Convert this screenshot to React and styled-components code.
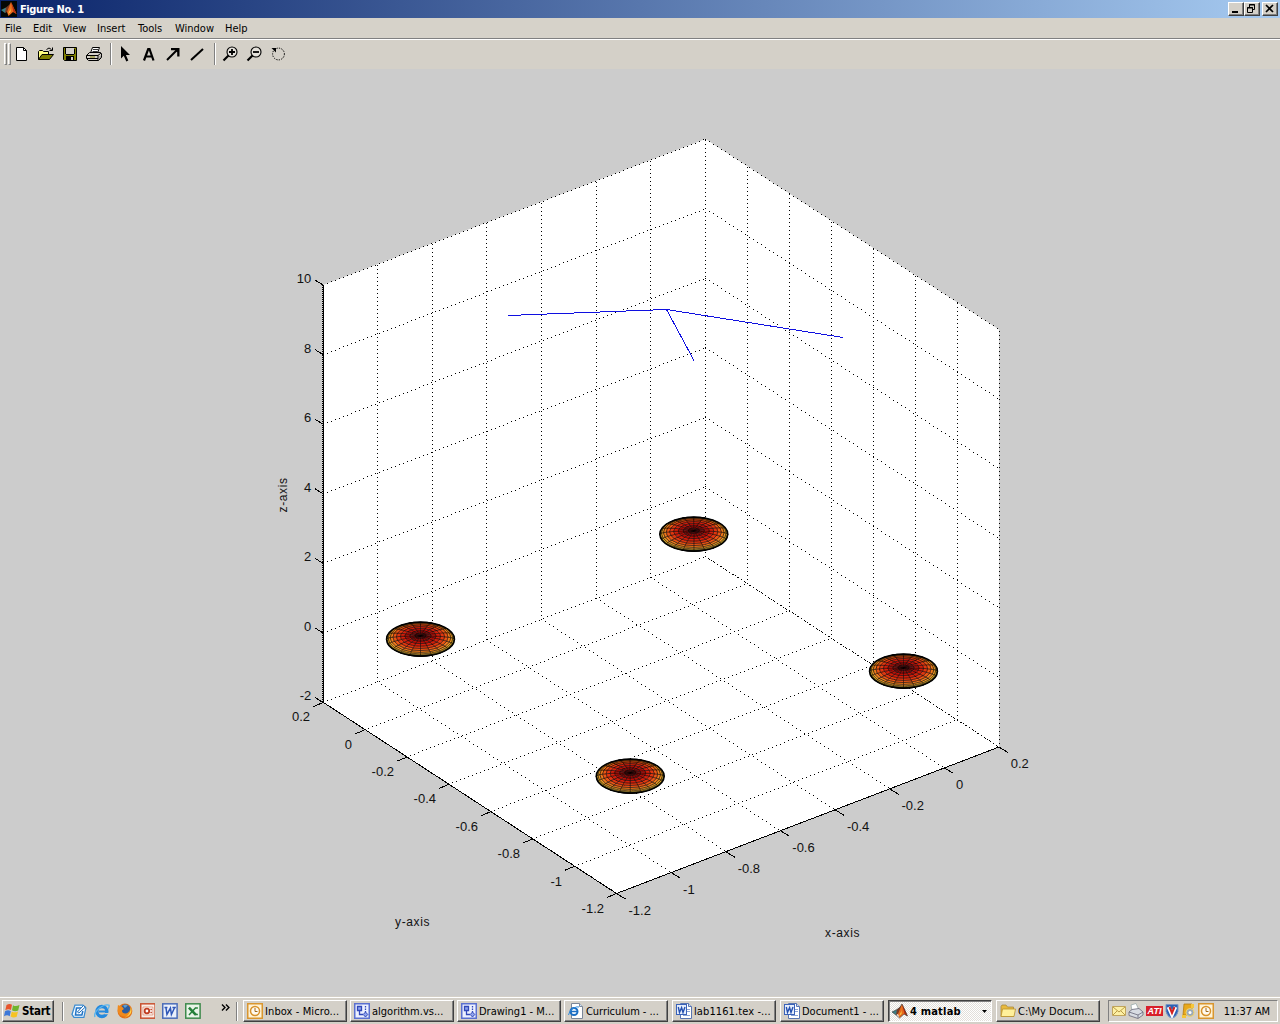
import React from "react";
import styled, { createGlobalStyle, css } from "styled-components";

const UI_FONT = `"DejaVu Sans Condensed", "DejaVu Sans", sans-serif`;

const Global = createGlobalStyle`
  * { box-sizing: border-box; }
  body { margin: 0; background: #cccccc; overflow: hidden; }
`;

const Desktop = styled.div`
  width: 1280px;
  height: 1024px;
  display: flex;
  flex-direction: column;
  background: #cccccc;
  color: #000;
  font: 11px/14px ${UI_FONT};
  font-stretch: condensed;
  white-space: nowrap;
`;

const TitleBar = styled.header`
  height: 18px;
  flex: none;
  display: flex;
  align-items: center;
  padding: 0 2px 0 1px;
  background: linear-gradient(90deg, #0a246a, #a6caf0);
`;

const Title = styled.h1`
  flex: 1;
  margin: 0 0 0 3px;
  padding-top: 1px;
  color: #fff;
  font-size: 11px;
  line-height: 18px;
  font-weight: bold;
  letter-spacing: -0.4px;
`;

const raised = css`
  background: #d4d0c8;
  border: 1px solid;
  border-color: #fff #404040 #404040 #fff;
  box-shadow: inset -1px -1px #808080;
`;

const CaptionButton = styled.button`
  ${raised}
  width: 16px;
  height: 14px;
  padding: 0;
  margin-left: ${(p) => p.$gap || 0}px;
  display: flex;
`;

const MenuBar = styled.nav`
  height: 21px;
  flex: none;
  display: flex;
  align-items: center;
  gap: 12px;
  padding: 2px 5px 0;
  background: #d6d2c9;
  border-bottom: 1px solid #808080;
`;

const MenuItem = styled.span`
  width: ${(p) => p.$w}px;
`;

const ToolBar = styled.div`
  height: 30px;
  flex: none;
  display: flex;
  align-items: center;
  padding: 0 0 1px 4px;
  background: #d4d0c8;
  border-top: 1px solid #fff;
`;

const Grip = styled.i`
  width: 3px;
  height: 22px;
  margin-right: 1px;
  border: 1px solid;
  border-color: #fff #808080 #808080 #fff;
`;

const ToolGroup = styled.div`
  display: flex;
  margin-left: ${(p) => p.$shift || 0}px;
`;

const ToolIcon = styled.span`
  width: 24px;
  height: 24px;
  display: flex;
  align-items: center;
  justify-content: center;
`;

const Divider = styled.i`
  width: 2px;
  height: ${(p) => p.$h || 22}px;
  margin: 0 ${(p) => p.$right || 0}px 0 ${(p) => p.$left || 0}px;
  border-left: 1px solid #808080;
  border-right: 1px solid #fff;
`;

const FigureArea = styled.main`
  flex: 1;
  min-height: 0;
  background: #cccccc;
  svg { display: block; }
`;

const TaskBar = styled.footer`
  height: 28px;
  flex: none;
  display: flex;
  align-items: center;
  padding: 3px 2px 1px;
  background: #d4d0c8;
  box-shadow: inset 0 1px #d4d0c8, inset 0 2px #fff;
`;

const StartButton = styled.button`
  ${raised}
  width: 52px;
  height: 22px;
  display: flex;
  align-items: center;
  gap: 2px;
  padding: 0 0 0 1px;
  font: bold 11.5px/14px ${UI_FONT};
  font-stretch: condensed;
  letter-spacing: -0.25px;
  color: #000;
`;

const QuickLaunch = styled.div`
  width: 165px;
  display: flex;
  align-items: center;
  gap: 7px;
  padding-left: 6px;
`;

const Chevrons = styled.svg`
  margin: 0 0 7px 13px;
`;

const Tasks = styled.div`
  width: 862px;
  display: flex;
  gap: 3px;
`;

const Task = styled.button`
  ${raised}
  width: 104px;
  height: 22px;
  flex: none;
  display: flex;
  align-items: center;
  gap: 2px;
  padding: 0 4px 0 3px;
  font: ${(p) => (p.$active ? "bold" : "normal")} 11px/14px ${UI_FONT};
  font-stretch: condensed;
  color: #000;
  text-align: left;
  &:nth-child(n + 5) { margin-left: 1px; }
  ${(p) =>
    p.$active &&
    css`
      background: repeating-conic-gradient(#fff 0 25%, #e2dfda 0 50%) 0 0 / 2px 2px;
      border-color: #404040 #fff #fff #404040;
      box-shadow: inset 1px 1px #808080;
    `}
  svg { flex: none; }
`;

const TaskLabel = styled.span`
  flex: 1;
  padding-top: 1px;
  letter-spacing: ${(p) => p.$ls || 0}px;
`;

const Tray = styled.div`
  width: 170px;
  height: 22px;
  margin-left: auto;
  display: flex;
  align-items: center;
  gap: 2px;
  padding: 0 3px;
  border: 1px solid;
  border-color: #808080 #fff #fff #808080;
`;

const Clock = styled.time`
  margin-left: auto;
  margin-right: 4px;
  padding-top: 1px;
  letter-spacing: -0.1px;
`;

/* ---------- icons ---------- */

const Icon = ({ w = 16, h = 16, children }) => (
  <svg width={w} height={h} viewBox={`0 0 ${w} ${h}`}>{children}</svg>
);

const MatlabIcon = ({ boxed }) => (
  <Icon>
    {boxed && <rect y="0" width="16" height="16" fill="#050805" />}
    <path d="M0 9 5 6.500 8 9 4 12Z" fill="#3d7f86" />
    <path d="M5 6.500Q8 5 10 1L8 10 4 12Z" fill="#7b3a22" />
    <path d="M10 1Q12 5 15.500 13L12 11 7.500 15 6 11Z" fill="#e8681b" />
    <path d="M10 1 9.500 8 7 13 9.500 11Z" fill="#f8d34a" />
    <path d="M10 1Q12 5 15.500 13L12.500 11Z" fill="#b52b10" />
    {!boxed && <path d="M0 9 5 6.500Q8 5 10 1 12 5 15.500 13L12 11 7.500 15 4 12Z" fill="none" stroke="#333" strokeWidth=".6" />}
  </Icon>
);

const toolIcons = {
  new: (
    <Icon>
      <path d="M2.500 1.500h7l3 3v10h-10z" fill="#fff" stroke="#000" />
      <path d="M9.500 1.500v3h3" fill="none" stroke="#000" />
    </Icon>
  ),
  open: (
    <Icon>
      <path d="M.5 13.500V5.500l1-1h3l1 1h5v3" fill="#ffff80" stroke="#000" />
      <path d="M.5 13.500 4 8.500h11.500l-4 5z" fill="#808000" stroke="#000" />
      <path d="M8.500 3.500Q11 .5 13.500 3.500M14.500 1.500v3h-3" fill="none" stroke="#000" />
    </Icon>
  ),
  save: (
    <Icon>
      <path d="M1.500 1.500h13v13h-12l-1-1z" fill="#808000" stroke="#000" />
      <path d="M4 2h8v6H4z" fill="#d4d0c8" />
      <path d="M3.500 2v6M12.500 3v5M4 8.500h8" stroke="#000" />
      <path d="M4 10h8v5H4z" fill="#000" />
      <path d="M9 11h2v3H9z" fill="#d4d0c8" />
    </Icon>
  ),
  print: (
    <Icon>
      <path d="M4.500 7 6.500 1.500h7L11.500 7z" fill="#fff" stroke="#000" />
      <path d="M7 3.500h5M6.500 5.500h5" stroke="#000" strokeWidth=".8" />
      <path d="m.5 9.500 3-3h11l1 1v4l-3 3h-10l-2-2z" fill="#d4d0c8" stroke="#000" />
      <path d="M.5 9.500h11.500l3-2.500M12 9.500v5M1 12.500h11" fill="none" stroke="#000" />
      <path d="M4 11h5" stroke="#808000" />
      <path d="M13 11.500 15 9.500M13 13l2-2" stroke="#666" strokeWidth=".7" />
    </Icon>
  ),
  pointer: (
    <Icon>
      <path d="M4 0v12.500l2.800-2.700L9.300 15.500l2-1L8.900 9H13z" fill="#000" />
    </Icon>
  ),
  text: (
    <Icon>
      <path d="M3 14.500 7.200 3h1.300L12.500 14.500M4.500 10.500h6.500" fill="none" stroke="#000" strokeWidth="2.200" />
    </Icon>
  ),
  arrow: (
    <Icon>
      <path d="M2 14 12 4" stroke="#000" strokeWidth="2" />
      <path d="M6 2h8.500v8.500h-2.300V6.300L10.200 4.300H6z" fill="#000" />
    </Icon>
  ),
  line: (
    <Icon>
      <path d="M2 14 14 3" stroke="#000" strokeWidth="2" />
    </Icon>
  ),
  zoomIn: (
    <Icon>
      <circle cx="10" cy="6" r="5" fill="#e4e1db" stroke="#000" strokeWidth="1.100" />
      <path d="M7 6h6M10 3v6" stroke="#000" strokeWidth="1.800" />
      <path d="M6.500 9.500 1.500 14.500" stroke="#000" strokeWidth="2.200" />
    </Icon>
  ),
  zoomOut: (
    <Icon>
      <circle cx="10" cy="6" r="5" fill="#e4e1db" stroke="#000" strokeWidth="1.100" />
      <path d="M7 6h6" stroke="#000" strokeWidth="1.800" />
      <path d="M6.500 9.500 1.500 14.500" stroke="#000" strokeWidth="2.200" />
    </Icon>
  ),
  rotate: (
    <Icon>
      <circle cx="8.500" cy="8" r="5.900" fill="none" stroke="#000" strokeDasharray="1.300 1.200" />
      <path d="M1.500 2h4.500v4.500z" fill="#000" />
    </Icon>
  ),
};

const appIcons = {
  desktop: (
    <Icon>
      <path d="M4 2h8l3 3-2 9.500H3l-2-3z" fill="#f4faff" stroke="#3b8bd0" strokeWidth="1.300" />
      <path d="M11 5H5.500L4.500 12h6.500l1-4" fill="none" stroke="#2173c4" strokeWidth="1.500" />
      <path d="m6.500 9 6-6.500 2 1.500L8 10z" fill="#fff" stroke="#1b6bb8" />
    </Icon>
  ),
  ie: (
    <Icon>
      <circle cx="8" cy="8.500" r="5" fill="none" stroke="#2589dd" strokeWidth="3.400" />
      <path d="M5 8.500h8.500" stroke="#2589dd" strokeWidth="2" />
      <path d="M10.500 10h4.500v1.300h-4.500z" fill="#d4d0c8" />
      <path d="M1 14Q-.5 10 5 5.500T15 2Q16 3 14 6" fill="none" stroke="#5ab5ee" strokeWidth="1.400" />
    </Icon>
  ),
  firefox: (
    <Icon>
      <circle cx="8" cy="8" r="7.500" fill="#e2731a" />
      <circle cx="8.500" cy="6.500" r="5" fill="#2c5c9f" />
      <path d="M6 2.500q3-1.500 5 0L8 5z" fill="#5e9ed0" />
      <path d="M1 2q2 1.500 4 1.500L7 6 5 7.500q0 3 3.500 3t4-3.500q1 2-.5 5-3.500 3-8 .5T1 2z" fill="#f08a1d" />
      <path d="M14 4q1.500 4-.5 7t-6 3.500q6-2 6.500-10.500z" fill="#ffd54d" />
    </Icon>
  ),
  powerpoint: (
    <Icon>
      <rect x=".75" y=".75" width="14.500" height="14.500" fill="#fbeee8" stroke="#c8502f" strokeWidth="1.500" />
      <path d="M3 4h10v8H3z" fill="#fff" stroke="#d98a70" strokeWidth=".8" />
      <circle cx="7" cy="8" r="2.300" fill="none" stroke="#c03c20" strokeWidth="1.800" />
      <path d="M10.500 6.500h1.500M10.500 9.500h1.500" stroke="#c03c20" strokeWidth="1.500" />
    </Icon>
  ),
  word: (
    <Icon>
      <rect x=".75" y=".75" width="14.500" height="14.500" fill="#eaf0fb" stroke="#4a6cb8" strokeWidth="1.500" />
      <path d="M2.500 4.500h3M10.500 4.500h3.500M4 4.500 5 11.500 8.500 5 9.500 11.500 12.800 4.500" fill="none" stroke="#2f57b8" strokeWidth="1.500" />
    </Icon>
  ),
  excel: (
    <Icon>
      <rect x=".75" y=".75" width="14.500" height="14.500" fill="#e9f4e8" stroke="#3d8a4b" strokeWidth="1.500" />
      <path d="m4 4.500 7 7.500" stroke="#25803a" strokeWidth="2.600" />
      <path d="m11 4.500-7 7.500M10 5h3M10 11.500h3" stroke="#25803a" strokeWidth="1.500" />
    </Icon>
  ),
  outlook: (
    <Icon>
      <rect x=".75" y=".75" width="14.500" height="14.500" fill="#fff3d6" stroke="#d9962f" strokeWidth="1.500" />
      <circle cx="8" cy="8" r="4.500" fill="#fffaf0" stroke="#d8922b" strokeWidth="1.500" />
      <path d="M8 5v3.500h2.500" fill="none" stroke="#a06a1c" />
    </Icon>
  ),
  visio: (
    <Icon>
      <rect x=".75" y=".75" width="14.500" height="14.500" fill="#edf1ff" stroke="#5a70d0" strokeWidth="1.500" />
      <path d="M3.500 3.500h4v4h-4z" fill="#8fa4ee" stroke="#3148b8" strokeWidth="1.300" />
      <path d="M5.500 8v3.500h3.500" fill="none" stroke="#3148b8" strokeWidth="1.300" />
      <path d="M11.500 3v6" stroke="#3148b8" strokeWidth="1.300" strokeDasharray="1.500 1" />
      <path d="m11.500 9 2.300 2.500-2.300 2.500-2.300-2.500z" fill="#8fa4ee" stroke="#3148b8" />
    </Icon>
  ),
  iePage: (
    <Icon>
      <path d="M3.500.5h8l3 3v12h-11z" fill="#fff" stroke="#7b8798" />
      <path d="M11.500.5v3h3" fill="#cfe0f4" stroke="#7b8798" />
      <circle cx="6" cy="8.500" r="3.500" fill="none" stroke="#1b6fc4" strokeWidth="2" />
      <path d="M3 8.500h7" stroke="#1b6fc4" strokeWidth="1.500" />
      <path d="M.5 12Q1 8 5 5.500T11 4" fill="none" stroke="#2f8bdc" />
    </Icon>
  ),
  wordPage: (
    <Icon>
      <path d="M4.500.5h8l3 3v12h-11z" fill="#fff" stroke="#5874b0" />
      <path d="M12.500.5v3h3" fill="#cfdcf4" stroke="#5874b0" />
      <path d="M11 6.500h3M11 8.500h3M7 12.500h7" stroke="#8aa3d8" />
      <rect x=".5" y="1.500" width="10" height="10" fill="#e6eefc" stroke="#3a62b8" />
      <path d="M2.300 4 3.500 9.500 5.600 4.500 7 9.500 9 4" fill="none" stroke="#2450b0" strokeWidth="1.400" />
    </Icon>
  ),
  folder: (
    <Icon>
      <path d="M1 13.500V3.500l1-1.500h4l1.500 2h6v9.500z" fill="#e8b93c" stroke="#a98a3c" strokeWidth=".8" />
      <path d="M1 13.500 2.500 6h13L14 13.500z" fill="#fff09a" stroke="#b8912e" strokeWidth=".8" />
    </Icon>
  ),
  mail: (
    <Icon w={14}>
      <path d="M.5 3.500h13v9H.5z" fill="#fdf0a4" stroke="#c0a45c" />
      <path d="m1 4 6 5 6-5M1 12l4-4M13 12 9 8" fill="none" stroke="#b3923c" strokeWidth=".9" />
    </Icon>
  ),
  printer: (
    <Icon>
      <path d="m4 8-1-6 5-1.500L11 7z" fill="#fff" stroke="#9aa" strokeWidth=".8" />
      <path d="m1 9 3-2.500 7-1 4 3.500v3l-5 3.500-9-3z" fill="#d8dce2" stroke="#667" strokeWidth=".8" />
      <path d="m1 9 9 3 5-3M10 12v3" fill="none" stroke="#667" strokeWidth=".8" />
    </Icon>
  ),
  shield: (
    <Icon w={14}>
      <path d="M1 1.500h12v7q-1 5-6 7-5-2-6-7z" fill="#2d62b5" stroke="#7996c4" />
      <path d="m3.500 4 3.500 8 3.500-8" fill="none" stroke="#fff" strokeWidth="3.500" />
      <path d="m4.500 4 2.500 6 2.500-6" fill="none" stroke="#d22020" strokeWidth="2" />
    </Icon>
  ),
  update: (
    <Icon w={15}>
      <path d="M3 1h8v11H2z" fill="#e8a91c" stroke="#b37b10" strokeWidth=".8" />
      <circle cx="9" cy="9.500" r="4" fill="#9aa9b8" stroke="#f4d46a" />
      <circle cx="9" cy="9.500" r="1.500" fill="#fff" />
      <path d="M10 1h3v4h-3zM1 12h4v3H1z" fill="#f5c63a" />
    </Icon>
  ),
};

const AtiBadge = styled.span`
  width: 17px;
  height: 10px;
  flex: none;
  background: #d81f2a;
  color: #fff;
  font: italic bold 9px/10px "Liberation Sans", sans-serif;
  text-align: center;
`;

const WindowsFlag = () => (
  <Icon>
    <path d="M2.500 2Q5.500 0 8 1.800L7 7Q4.500 5.500 1.300 7.200z" fill="#e8552c" />
    <path d="M9 2.200Q11.500 4 15.500 2L14.200 7.500Q11 9 8 7.300z" fill="#6fb52c" />
    <path d="M1 8.300Q4 6.500 6.800 8.200L5.700 13.200Q3 11.500 0 13.300z" fill="#3c78d8" />
    <path d="M7.800 8.500Q10.500 10.200 14 8.500L12.700 13.800Q9.500 15.500 6.600 13.600z" fill="#f6c324" />
  </Icon>
);

/* ---------- 3-D plot ---------- */

const AxisText = styled.text`
  font: ${(p) => p.$size || 13}px "Liberation Sans", Arial, sans-serif;
  letter-spacing: ${(p) => p.$ls || 0}px;
  fill: #111;
`;

const TOP = 69;
const BACK = [705.5, 556.5];
const LEFT = [323, 702.5];
const RIGHT = [999, 747];
const FRONT = [616.5, 893.5];
const HEIGHT = 417.5;

const mix = (a, b, t) => [a[0] + (b[0] - a[0]) * t, a[1] + (b[1] - a[1]) * t];
const up = (p, h) => [p[0], p[1] - h];

// One square pixel every `step` pixels of the longer direction.
function dotted(a, b, step = 4) {
  const n = Math.max(Math.abs(b[0] - a[0]), Math.abs(b[1] - a[1]));
  let d = "";
  for (let i = 0; i <= n; i += step) {
    const [x, y] = mix(a, b, i / n);
    d += `M${Math.floor(x)} ${Math.floor(y)}h1v1h-1z`;
  }
  return d;
}

const seven = [0, 1, 2, 3, 4, 5, 6, 7].map((i) => i / 7);
const heights = [0, 1, 2, 3, 4, 5, 6].map((i) => (HEIGHT * i) / 6);

const gridPath = [
  ...seven.map((t) => dotted(mix(LEFT, BACK, t), mix(FRONT, RIGHT, t))),
  ...seven.map((t) => dotted(mix(LEFT, FRONT, t), mix(BACK, RIGHT, t))),
  ...seven.map((t) => dotted(mix(LEFT, BACK, t), up(mix(LEFT, BACK, t), HEIGHT))),
  ...seven.map((t) => dotted(mix(BACK, RIGHT, t), up(mix(BACK, RIGHT, t), HEIGHT))),
  ...heights.map((h) => dotted(up(LEFT, h), up(BACK, h))),
  ...heights.map((h) => dotted(up(BACK, h), up(RIGHT, h))),
  dotted([322, 285], [322, 702], 2),
  dotted(BACK, RIGHT, 3),
].join("");

const seg = (a, dx, dy) => `M${a[0]} ${a[1]}l${dx} ${dy}`;
const tickPath = [
  ...heights.map((h) => seg(up(LEFT, h), -8, -5)),
  ...seven.map((t) => seg(mix(LEFT, FRONT, t), -9.5, 4)),
  ...seven.map((t) => seg(mix(FRONT, RIGHT, t), 9, 5.5)),
].join("");

const poly = (pts) => pts.map((p) => p.join(",")).join(" ");

function heat(s) {
  const stops = [
    [0, [240, 228, 70]],
    [0.2, [236, 190, 50]],
    [0.45, [240, 140, 30]],
    [0.7, [235, 70, 18]],
    [0.9, [205, 18, 8]],
    [1, [130, 0, 0]],
  ];
  const v = Math.max(0, Math.min(1, s));
  const k = Math.max(1, stops.findIndex((q) => q[0] >= v));
  const [s0, c0] = stops[k - 1];
  const [s1, c1] = stops[k];
  const t = (v - s0) / (s1 - s0);
  return `rgb(${c0.map((c, i) => Math.round(c + (c1[i] - c) * t)).join(",")})`;
}

const rad = Math.PI / 180;
const ellipsoidFaces = [];
for (let lat = -27; lat < 90; lat += 9) {
  for (let lon = 0; lon < 360; lon += 18) {
    const pt = (f, l) => [
      (34 * Math.cos(f * rad) * Math.cos(l * rad)).toFixed(2),
      (16.6 * Math.cos(f * rad) * Math.sin(l * rad) - 3.5 * Math.sin(f * rad)).toFixed(2),
    ];
    ellipsoidFaces.push({
      points: poly([pt(lat, lon), pt(lat, lon + 18), pt(lat + 9, lon + 18), pt(lat + 9, lon)]),
      fill: heat(Math.sin((lat + 4.5) * rad)),
    });
  }
}

const Ellipsoid = ({ x, y }) => (
  <g transform={`translate(${x} ${y})`} stroke="#000" strokeWidth=".48">
    {ellipsoidFaces.map((f, i) => (
      <polygon key={i} points={f.points} fill={f.fill} />
    ))}
    <ellipse rx="34" ry="17" fill="none" strokeWidth="1.400" />
    <path d="M-12-16Q0-18 12-16M-12 16Q0 18 12 16" fill="none" strokeWidth="1.200" />
  </g>
);

const hLabels = ["-1.2", "-1", "-0.8", "-0.6", "-0.4", "-0.2", "0", "0.2"];
const zLabels = ["-2", "0", "2", "4", "6", "8", "10"];

const Plot = () => (
  <svg width="1280" height="927" viewBox={`0 ${TOP} 1280 927`}>
    <polygon
      fill="#fff"
      points={poly([up(LEFT, HEIGHT), up(BACK, HEIGHT), up(RIGHT, HEIGHT), RIGHT, FRONT, LEFT])}
    />
    <path d={gridPath} fill="#000" shapeRendering="crispEdges" />
    <g fill="none" stroke="#000" shapeRendering="crispEdges">
      <path d={`M323.500 285V702.500L${FRONT.join(" ")} ${RIGHT.join(" ")}`} />
      <path d={tickPath} />
    </g>
    <path
      d="M508 315.500 666.500 309.500 843 337.500M666.500 309.500 694 360.500"
      fill="none"
      stroke="#1010e0"
      shapeRendering="crispEdges"
    />
    <Ellipsoid x={693.8} y={534.2} />
    <Ellipsoid x={420.5} y={639.2} />
    <Ellipsoid x={903.5} y={671.2} />
    <Ellipsoid x={630.2} y={776.2} />
    {zLabels.map((t, i) => (
      <AxisText key={t} x="311.200" y={700 - i * 69.5} textAnchor="end">{t}</AxisText>
    ))}
    {hLabels.map((t, i) => (
      <AxisText key={t} x={604 - i * 42} y={913 - i * 27.4} textAnchor="end">{t}</AxisText>
    ))}
    {hLabels.map((t, i) => (
      <AxisText key={t} x={628.5 + i * 54.6} y={914.5 - i * 20.9}>{t}</AxisText>
    ))}
    <AxisText $size={12} $ls={0.65} x="395" y="926">y-axis</AxisText>
    <AxisText $size={12} $ls={0.65} x="825" y="937">x-axis</AxisText>
    <AxisText $size={12} $ls={0.65} transform="translate(287 512.500) rotate(-90)">z-axis</AxisText>
  </svg>
);

/* ---------- page ---------- */

const menus = [["File", 16], ["Edit", 18], ["View", 22], ["Insert", 29], ["Tools", 25], ["Window", 38], ["Help", 22]];

const tasks = [
  ["outlook", "Inbox - Micro...", 0.1],
  ["visio", "algorithm.vs...", 0],
  ["visio", "Drawing1 - M...", 0],
  ["iePage", "Curriculum - ...", -0.05],
  ["wordPage", "lab1161.tex -...", 0.1],
  ["wordPage", "Document1 - ...", 0],
  ["matlab", "4 matlab", 0.2],
  ["folder", "C:\\My Docum...", 0],
];

const tools = (keys) => keys.map((k) => <ToolIcon key={k}>{toolIcons[k]}</ToolIcon>);

export default function App() {
  return (
    <Desktop>
      <Global />
      <TitleBar>
        <MatlabIcon boxed />
        <Title>Figure No. 1</Title>
        <CaptionButton aria-label="Minimize">
          <Icon w={14} h={12}><path d="M3 8h6v2H3z" fill="#000" /></Icon>
        </CaptionButton>
        <CaptionButton aria-label="Restore">
          <Icon w={14} h={12}>
            <path d="M4.500 4V1.500h5v5H8M4 2h6M2.500 4.500h5v5h-5zM2 5h6" fill="none" stroke="#000" />
          </Icon>
        </CaptionButton>
        <CaptionButton aria-label="Close" $gap={2}>
          <Icon w={14} h={12}><path d="m3 2 7 7M10 2 3 9" stroke="#000" strokeWidth="1.700" /></Icon>
        </CaptionButton>
      </TitleBar>
      <MenuBar>
        {menus.map(([m, w]) => <MenuItem key={m} $w={w}>{m}</MenuItem>)}
      </MenuBar>
      <ToolBar>
        <Grip /><Grip />
        <ToolGroup $shift={-2}>{tools(["new", "open", "save", "print"])}</ToolGroup>
        <Divider $left={4} $right={1} />
        <ToolGroup>{tools(["pointer", "text", "arrow", "line"])}</ToolGroup>
        <Divider $left={5} $right={2} />
        <ToolGroup>{tools(["zoomIn", "zoomOut", "rotate"])}</ToolGroup>
      </ToolBar>
      <FigureArea><Plot /></FigureArea>
      <TaskBar>
        <StartButton><WindowsFlag />Start</StartButton>
        <Divider $h={19} $left={8} $right={1} />
        <QuickLaunch>
          {["desktop", "ie", "firefox", "powerpoint", "word", "excel"].map((k) => (
            <React.Fragment key={k}>{appIcons[k]}</React.Fragment>
          ))}
          <Chevrons width="9" height="7" viewBox="0 0 9 7">
            <path d="M1 .5 4 3.500 1 6.500M5 .5 8 3.500 5 6.500" fill="none" stroke="#000" strokeWidth="1.400" />
          </Chevrons>
        </QuickLaunch>
        <Divider $h={19} $left={6} $right={5} />
        <Tasks>
          {tasks.map(([icon, label, ls]) => (
            <Task key={label} $active={icon === "matlab"}>
              {icon === "matlab" ? <MatlabIcon /> : appIcons[icon]}
              <TaskLabel $ls={ls}>{label}</TaskLabel>
              {icon === "matlab" && (
                <Icon w={5} h={3}><path d="M0 0h5L2.500 3z" fill="#000" /></Icon>
              )}
            </Task>
          ))}
        </Tasks>
        <Tray>
          {appIcons.mail}
          {appIcons.printer}
          <AtiBadge>ATI</AtiBadge>
          {appIcons.shield}
          {appIcons.update}
          {appIcons.outlook}
          <Clock>11:37 AM</Clock>
        </Tray>
      </TaskBar>
    </Desktop>
  );
}
